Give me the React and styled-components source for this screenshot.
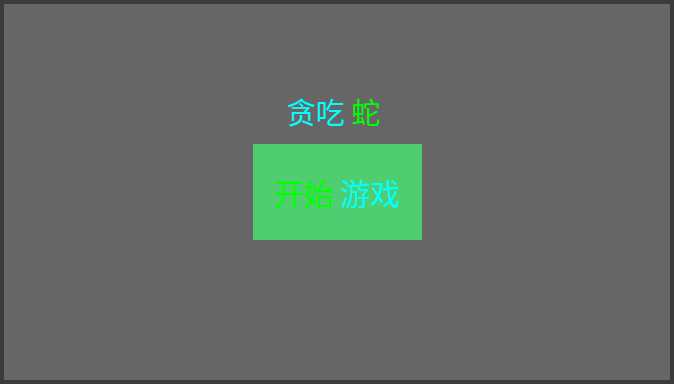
import React from "react";
import styled, { createGlobalStyle } from "styled-components";

const GlobalStyle = createGlobalStyle`
  html, body {
    margin: 0;
    padding: 0;
    background: #3b3b3b;
  }
  * {
    box-sizing: border-box;
  }
`;

const Stage = styled.div`
  width: 674px;
  height: 384px;
  border: 4px solid #3b3b3b;
  background: #666666;
  display: flex;
  flex-direction: column;
  align-items: center;
  padding-top: 87px;
  font-family: "Noto Sans CJK SC", "Noto Sans", sans-serif;
`;

const Title = styled.h1`
  margin: 0;
  padding-right: 7px;
  font-size: 29px;
  font-weight: 400;
  line-height: 40px;
`;

const Word = styled.span`
  color: ${(props) => props.$color};
`;

const StartButton = styled.button`
  margin-top: 13px;
  width: 169px;
  height: 96px;
  border: none;
  background: #51cd71;
  font-family: inherit;
  font-size: 30px;
  line-height: 40px;
  padding: 0;
  cursor: pointer;
  display: flex;
  align-items: center;
  justify-content: center;
`;

const App = () => {
  return (
    <>
      <GlobalStyle />
      <Stage>
        <Title>
          <Word $color="#00ffff">贪吃</Word> <Word $color="#00ff00">蛇</Word>
        </Title>
        <StartButton>
          <Word $color="#00ff00">开始</Word>&nbsp;<Word $color="#00ffff">游戏</Word>
        </StartButton>
      </Stage>
    </>
  );
};

export default App;
